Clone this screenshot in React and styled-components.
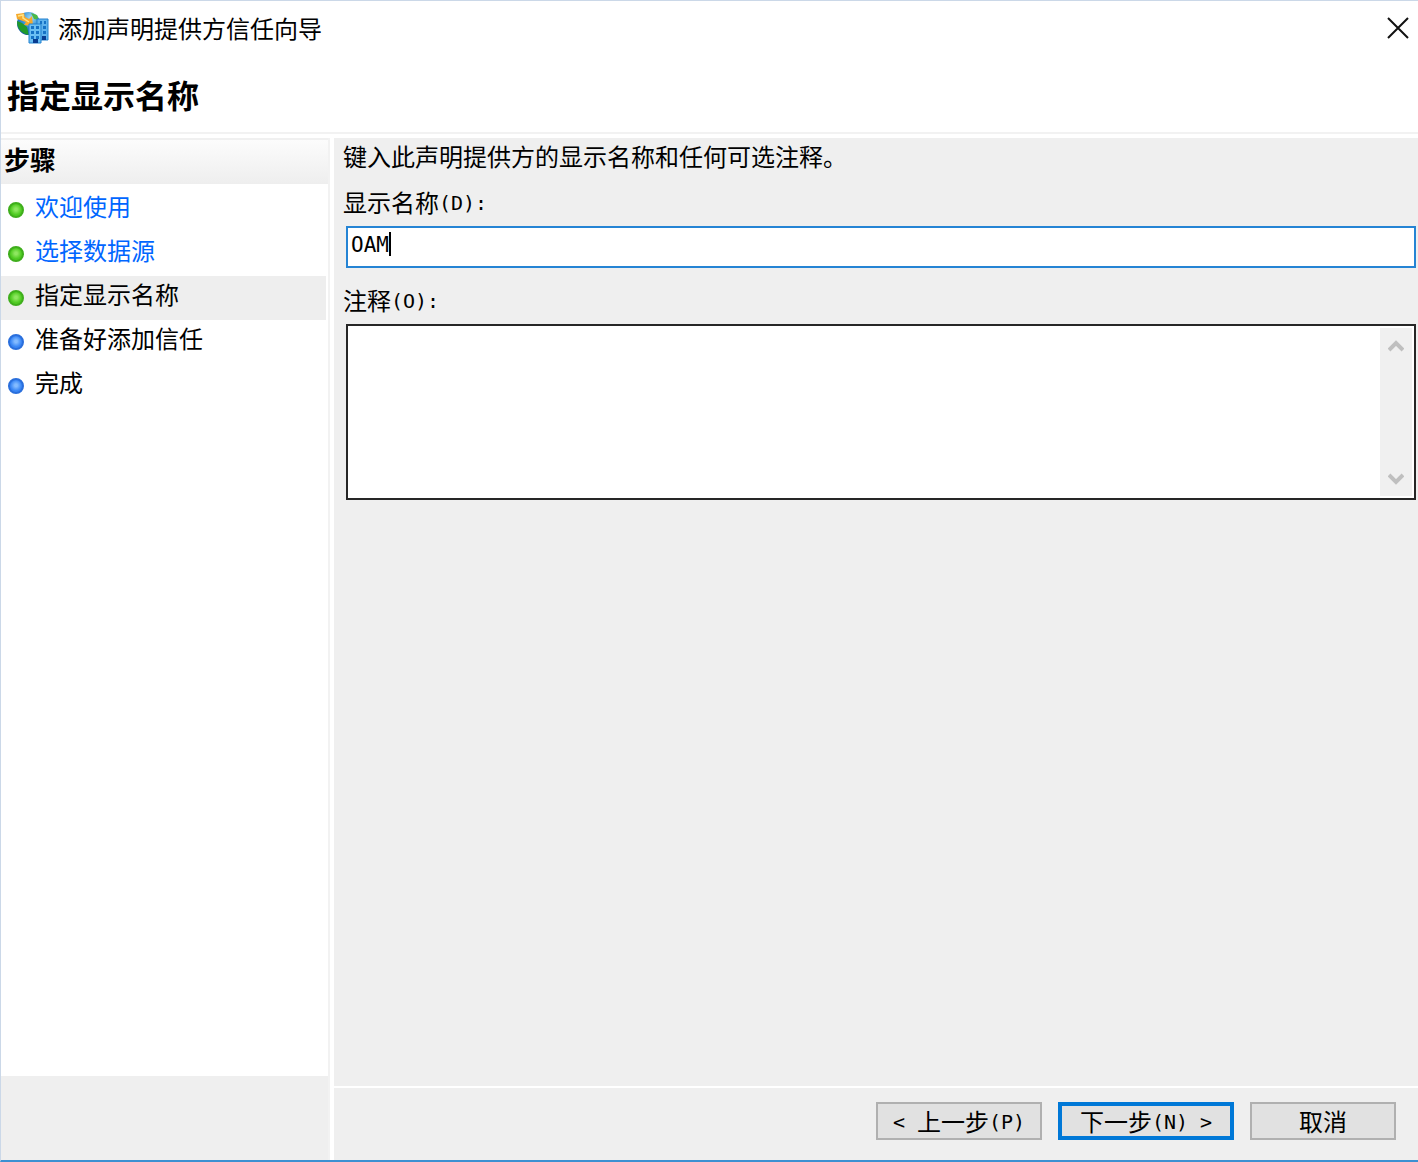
import { useState } from "react";
import styled, { createGlobalStyle } from "styled-components";

const GlobalStyle = createGlobalStyle`
  * {
    box-sizing: border-box;
  }
  body {
    margin: 0;
    font-family: "Noto Sans CJK SC", sans-serif;
    font-size: 24px;
    line-height: 32px;
    color: #000;
    background: #fff;
  }
`;

const Window = styled.div`
  display: flex;
  flex-direction: column;
  min-height: 100vh;
  border-top: 1px solid #cbd8e8;
  border-left: 1px solid #cbd8e8;
  border-bottom: 2px solid #3c90d2;
`;

const TitleBar = styled.header`
  display: flex;
  align-items: center;
  height: 54px;
  padding: 0 8px 0 15px;
`;

const Title = styled.div`
  flex: 1;
  margin-left: 8px;
`;

const CloseButton = styled.button`
  display: flex;
  padding: 0;
  border: none;
  background: none;
`;

const Heading = styled.h1`
  margin: 0;
  padding: 19px 6px 18px;
  font-size: 32px;
  line-height: 40px;
  font-weight: 700;
  border-bottom: 2px solid #f2f2f2;
`;

const Body = styled.div`
  flex: 1;
  display: flex;
  gap: 4px;
  padding-top: 4px;
`;

const Sidebar = styled.aside`
  display: flex;
  flex-direction: column;
  width: 329px;
  border-right: 2px solid #f2f2f2;
`;

const StepsTitle = styled.h2`
  margin: 0 0 4px;
  padding: 3px 3px 9px;
  font-size: 26px;
  line-height: 32px;
  font-weight: 700;
  border-top: 2px solid #f0f0f0;
  background: linear-gradient(#fcfcfc, #eee);
`;

const StepList = styled.ol`
  flex: 1;
  margin: 0;
  padding: 0;
  list-style: none;
`;

const Step = styled.li`
  display: flex;
  align-items: center;
  gap: 11px;
  height: 44px;
  margin-right: 2px;
  padding-left: 7px;
  background: ${(props) => (props.$current ? "#eee" : "none")};
`;

const Bullet = styled.span`
  width: 16px;
  height: 16px;
  border-radius: 50%;
  border: 2px solid ${(props) => (props.$done ? "#3fae1c" : "#2a6fdc")};
  background: ${(props) =>
    props.$done
      ? "radial-gradient(circle at 50% 45%, #8ee660 15%, #4fcb22 60%)"
      : "radial-gradient(circle at 50% 45%, #83bbff 15%, #3a87f5 60%)"};
`;

const StepText = styled.span`
  padding-bottom: 8px;
`;

const StepLink = styled.a`
  padding-bottom: 8px;
  color: #0066ff;
  text-decoration: none;
`;

const SidebarFoot = styled.div`
  height: 84px;
  background: #efefef;
`;

const Main = styled.main`
  flex: 1;
  display: flex;
  flex-direction: column;
  min-width: 0;
  background: #efefef;
`;

const Form = styled.form`
  flex: 1;
  display: flex;
  flex-direction: column;
  padding: 2px 2px 0 12px;
`;

const Hint = styled.p`
  margin: 0 0 14px -3px;
`;

const Label = styled.label`
  margin: 0 0 8px -3px;
`;

const Latin = styled.span`
  font-family: "DejaVu Sans Mono", monospace;
  font-size: 20px;
  line-height: 20px;
  vertical-align: 2px;
  white-space: pre;
`;

const NameBox = styled.div`
  display: flex;
  height: 42px;
  margin-bottom: 16px;
  padding: 2px;
  border: 2px solid #2584d4;
  background: #fff;
`;

const NameInput = styled.input`
  field-sizing: content;
  height: 30px;
  padding: 0 0 0 1px;
  border: none;
  outline: none;
  caret-color: transparent;
  font-family: "DejaVu Sans Mono", monospace;
  font-size: 21px;
`;

const Caret = styled.span`
  width: 2px;
  height: 24px;
  margin-top: 2px;
  background: #000;
`;

const NotesBox = styled.div`
  display: flex;
  height: 176px;
  padding: 2px;
  border: 2px solid #262626;
  background: #fff;
`;

const Notes = styled.textarea`
  flex: 1;
  border: none;
  outline: none;
  resize: none;
  font: inherit;
  overflow: hidden;
`;

const ScrollBar = styled.div`
  display: flex;
  flex-direction: column;
  justify-content: space-between;
  width: 32px;
  background: #f0f0f0;
`;

const ScrollButton = styled.button`
  display: flex;
  align-items: center;
  justify-content: center;
  height: 34px;
  padding: 0;
  border: none;
  background: none;
`;

const Footer = styled.footer`
  display: flex;
  justify-content: flex-end;
  gap: 16px;
  height: 74px;
  padding: 14px 22px 0 0;
  border-top: 2px solid #fff;
`;

const Button = styled.button`
  width: ${(props) => props.$width}px;
  height: 38px;
  padding: 0;
  border: ${(props) => (props.$primary ? "4px solid #0078d7" : "2px solid #b0b0b0")};
  background: #e1e1e1;
  color: #000;
  font: inherit;
  line-height: 30px;
  white-space: nowrap;
`;

const steps = [
  { text: "欢迎使用", done: true, link: true },
  { text: "选择数据源", done: true, link: true },
  { text: "指定显示名称", done: true, current: true },
  { text: "准备好添加信任" },
  { text: "完成" },
];

function AppIcon() {
  return (
    <svg width="34" height="34" viewBox="0 0 34 34" aria-hidden="true">
      <defs>
        <radialGradient id="globe" cx="0.6" cy="0.25" r="0.8">
          <stop offset="0" stopColor="#a8dcf5" />
          <stop offset="0.5" stopColor="#2f8fd6" />
          <stop offset="1" stopColor="#114f9e" />
        </radialGradient>
      </defs>
      <circle cx="12.5" cy="12.5" r="11.5" fill="url(#globe)" />
      <path d="M1 10 L6 12 L11 16 L13 24 C6 23 1 18 1 10 Z" fill="#1f9a2a" />
      <path d="M15 2 L21 4 L23 9 L18 8 Z" fill="#4cba45" />
      <path d="M0 3 L8 2 L9 6 L13 8 L16 5 L17 15 L8 14 L10 11 L4 9 L1 8 Z" fill="#f5a92c" />
      <path d="M2 5 L7 4 L7 7 L13 11" stroke="#ffe485" strokeWidth="1.5" fill="none" />
      <path d="M21 8 H32 V29 H21 Z" fill="#5fb2ec" stroke="#2381cf" />
      <path d="M13 13 H25 V32 H13 Z" fill="#6bbff3" stroke="#2381cf" />
      <path
        d="M15 15h3v3h-3z M20 15h3v3h-3z M15 20h3v3h-3z M20 20h3v3h-3z M15 25h3v3h-3z M20 25h3v3h-3z M24 10h2v3h-2z M28 10h2v3h-2z M27 15h3v3h-3z M27 20h3v3h-3z"
        fill="#1672c5"
      />
      <path d="M17 28h5v4h-5z M26 25h4v4h-4z" fill="#083c91" />
    </svg>
  );
}

function Chevron({ up }) {
  return (
    <svg width="16" height="14" viewBox="0 0 16 14" aria-hidden="true">
      <path d={up ? "M1 12 L8 5 L15 12" : "M1 3 L8 10 L15 3"} fill="none" stroke="#bfbfbf" strokeWidth="4" />
    </svg>
  );
}

function Steps() {
  return (
    <Sidebar>
      <StepsTitle>步骤</StepsTitle>
      <StepList>
        {steps.map((step) => (
          <Step key={step.text} $current={step.current}>
            <Bullet $done={step.done} />
            {step.link ? <StepLink href="#">{step.text}</StepLink> : <StepText>{step.text}</StepText>}
          </Step>
        ))}
      </StepList>
      <SidebarFoot />
    </Sidebar>
  );
}

function App() {
  const [name, setName] = useState("OAM");
  const [notes, setNotes] = useState("");

  return (
    <>
      <GlobalStyle />
      <Window>
        <TitleBar>
          <AppIcon />
          <Title>添加声明提供方信任向导</Title>
          <CloseButton aria-label="关闭">
            <svg width="24" height="24" viewBox="0 0 24 24">
              <path d="M2 2 L22 22 M22 2 L2 22" stroke="#111" strokeWidth="2" />
            </svg>
          </CloseButton>
        </TitleBar>
        <Heading>指定显示名称</Heading>
        <Body>
          <Steps />
          <Main>
            <Form id="trust" onSubmit={(e) => e.preventDefault()}>
              <Hint>键入此声明提供方的显示名称和任何可选注释。</Hint>
              <Label htmlFor="name">
                显示名称<Latin>(D):</Latin>
              </Label>
              <NameBox>
                <NameInput id="name" value={name} onChange={(e) => setName(e.target.value)} />
                <Caret />
              </NameBox>
              <Label htmlFor="notes">
                注释<Latin>(O):</Latin>
              </Label>
              <NotesBox>
                <Notes id="notes" value={notes} onChange={(e) => setNotes(e.target.value)} />
                <ScrollBar>
                  <ScrollButton type="button" aria-label="向上滚动">
                    <Chevron up />
                  </ScrollButton>
                  <ScrollButton type="button" aria-label="向下滚动">
                    <Chevron />
                  </ScrollButton>
                </ScrollBar>
              </NotesBox>
            </Form>
            <Footer>
              <Button type="button" $width={166}>
                <Latin>{"< "}</Latin>上一步<Latin>(P)</Latin>
              </Button>
              <Button type="submit" form="trust" $width={176} $primary>
                下一步<Latin>{"(N) >"}</Latin>
              </Button>
              <Button type="button" $width={146}>
                取消
              </Button>
            </Footer>
          </Main>
        </Body>
      </Window>
    </>
  );
}

export default App;
